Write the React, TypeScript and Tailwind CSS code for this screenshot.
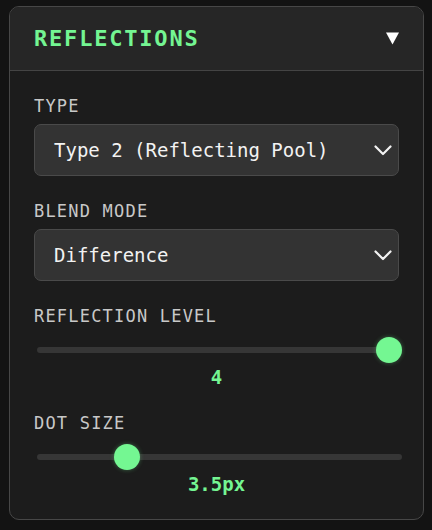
import React from 'react';

const mono = { fontFamily: '"DejaVu Sans Mono", "Liberation Mono", monospace' };

function Chevron() {
    return (
        <svg width="18" height="11" viewBox="0 0 18 11" fill="none">
            <polyline points="1.5,1.5 9,9 16.5,1.5" stroke="#f2f2f2" strokeWidth="2.2" strokeLinecap="round" strokeLinejoin="round" />
        </svg>
    );
}

function Select({ value }: { value: string }) {
    return (
        <div className="mt-[10px] h-[52px] flex items-center justify-between rounded-[7px] border border-[#4a4a4a] bg-[#333333] pl-[19px] pr-[6px]">
            <span className="text-[19px] leading-[19px] text-[#f2f2f2]">{value}</span>
            <Chevron />
        </div>
    );
}

function Slider({ pct, value }: { pct: number; value: string }) {
    // thumb 26px, track 365px wide
    const left = (365 - 26) * pct;
    return (
        <>
            <div className="mt-[13px] ml-[3px] w-[365px] h-[26px] relative flex items-center">
                <div className="w-full h-[6px] rounded-full bg-[#363636]" />
                <div
                    className="absolute top-0 w-[26px] h-[26px] rounded-full bg-[#74f792] shadow-[0_0_4px_rgba(116,247,146,0.35)]"
                    style={{ left }}
                />
            </div>
            <div className="mt-[5px] h-[19px] text-center text-[19px] leading-[19px] font-bold text-[#74f592]">
                {value}
            </div>
        </>
    );
}

function Label({ children }: { children: React.ReactNode }) {
    return <div className="h-[16px] text-[17px] leading-[16px] tracking-[1.2px] text-[#c8c8c8]">{children}</div>;
}

export default function App() {
    return (
        <div className="min-h-[530px] bg-[#131313] pt-[6px] pl-[9px]" style={mono}>
            <div className="w-[415px] rounded-[10px] border border-[#474747] bg-[#1c1c1c] overflow-hidden">
                {/* en-tête */}
                <div className="h-[64px] flex items-center justify-between border-b border-[#444444] bg-[#262626] px-[24px]">
                    <span className="text-[22px] leading-[22px] font-bold tracking-[1.8px] text-[#74f592]">REFLECTIONS</span>
                    <svg width="13" height="13" viewBox="0 0 13 13">
                        <polygon points="0,0.5 13,0.5 6.5,12.5" fill="#ffffff" />
                    </svg>
                </div>

                <div className="flex flex-col pt-[27px] px-[24px] pb-[25px]">
                    <Label>TYPE</Label>
                    <Select value="Type 2 (Reflecting Pool)" />

                    <div className="mt-[27px]">
                        <Label>BLEND MODE</Label>
                    </div>
                    <Select value="Difference" />

                    <div className="mt-[27px]">
                        <Label>REFLECTION LEVEL</Label>
                    </div>
                    <Slider pct={1} value="4" />

                    <div className="mt-[28px]">
                        <Label>DOT SIZE</Label>
                    </div>
                    <Slider pct={2.5 / 11} value="3.5px" />
                </div>
            </div>
        </div>
    );
}
